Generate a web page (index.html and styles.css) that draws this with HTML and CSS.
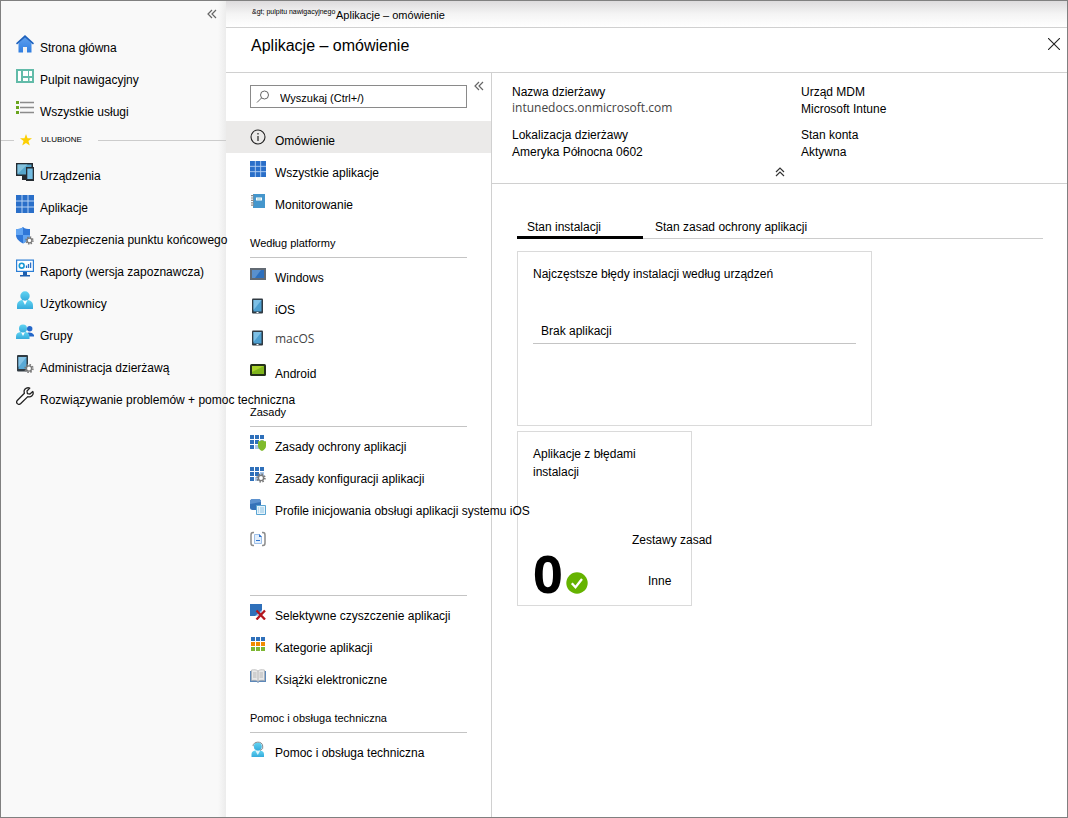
FILE: index.html
```html
<!DOCTYPE html>
<html lang="pl">
<head>
<meta charset="utf-8">
<title>Aplikacje – omówienie</title>
<link rel="stylesheet" href="styles.css">
</head>
<body>
<svg class="defs" aria-hidden="true">
  <defs>
    <linearGradient id="blue" x1="0" y1="0" x2="0" y2="1"><stop offset="0" stop-color="#5ea0ef"/><stop offset="1" stop-color="#2f7de0"/></linearGradient>
    <linearGradient id="cyan" x1="0" y1="0" x2="0" y2="1"><stop offset="0" stop-color="#62d4f2"/><stop offset="1" stop-color="#35aadb"/></linearGradient>
    <symbol id="grid" viewBox="0 0 18 18"><path fill="#2a6fc9" d="M0 0h18v18H0z"/><path d="M0 6h18M0 12h18M6 0v18M12 0v18" stroke="#b4d2f5" stroke-width="1"/></symbol>
    <symbol id="collapse" viewBox="0 0 10 10"><path d="M5 1 1 5l4 4M9 1 5 5l4 4" fill="none" stroke="currentColor" stroke-width="1.200"/></symbol>
    <symbol id="gear" viewBox="0 0 10 10"><circle cx="5" cy="5" r="3.800" fill="none" stroke="#7a7a7a" stroke-width="1.800" stroke-dasharray="1.500 1.480"/><circle cx="5" cy="5" r="2.600" fill="#fff" stroke="#7a7a7a" stroke-width="1.400"/></symbol>
    <symbol id="tablet" viewBox="0 0 16 16"><rect x="2" y=".5" width="11" height="15" rx="1" fill="#303a42"/><path fill="#4d9fd0" d="M3.500 2h8v11.500h-8z"/><path fill="#7dc0e6" d="M3.500 2h8l-8 10z"/><path stroke="#fff" d="M6.500 14.500h2"/></symbol>
    <symbol id="minigrid" viewBox="0 0 16 16"><path fill="#2f70ba" d="M0 0h4v4H0zM5 0h4v4H5zM10 0h4v4h-4zM0 5h4v4H0zM0 10h4v4H0zM5 5h4v4H5z"/><path fill="#a9c6e8" d="M10 5h4v4h-4zM5 10h4v4H5z"/></symbol>
  </defs>
</svg>
<div class="portal">
  <nav class="side" aria-label="Portal">
    <div class="side-top"><button class="icon-btn" aria-label="Zwiń"><svg class="chev"><use href="#collapse"/></svg></button></div>
    <a class="row" href="#"><svg viewBox="0 0 18 18"><path fill="url(#blue)" d="M2.500 8 9 2l6.500 6v9.500H11V12H7v5.500H2.500z"/><path fill="#1d61bd" d="M9 0 0 8.300l1 1.200L9 2.500l8 7 1-1.200z"/><path fill="#f2f2f2" d="M7 12h4v5.500H7z"/></svg><span>Strona główna</span></a>
    <a class="row" href="#"><svg viewBox="0 0 18 18"><path fill="#62bba9" d="M0 2h18v14H0z"/><path fill="#fff" d="M2 4h3v10H2zM7 4h9v5H7zM7 11h5v3H7zM13.500 11H16v3h-2.500z"/><path stroke="#62bba9" d="M12.500 4v5"/></svg><span>Pulpit nawigacyjny</span></a>
    <a class="row" href="#"><svg viewBox="0 0 18 18"><path fill="#6aa51e" d="M0 2h3v3H0zM0 7h3v3H0zM0 12h3v3H0z"/><path stroke="#8c8c8c" stroke-width="1.500" d="M4 3.500h14M4 8.500h14M4 13.500h14"/></svg><span>Wszystkie usługi</span></a>
    <div class="fav"><svg viewBox="0 0 12 12"><path fill="#fccf03" d="m6 0 1.500 4.300H12L8.400 7l1.400 4.600L6 8.900l-3.800 2.700L3.600 7 0 4.300h4.500z"/></svg><span>ULUBIONE</span></div>
    <a class="row" href="#"><svg viewBox="0 0 18 18"><path fill="#252b31" d="M0 0h17v13H0zM6 13h5v4H6z"/><path fill="#55a5cb" d="M1.500 1.500h14v10h-14z"/><path fill="#83c2dd" d="M1.500 1.500h10L1.500 11z"/><path fill="#252b31" d="M10 4h8v14h-8z"/><path fill="#72bbe1" d="M11.300 5.500h5.400v10.500h-5.400z"/></svg><span>Urządzenia</span></a>
    <a class="row" href="#"><svg><use href="#grid"/></svg><span>Aplikacje</span></a>
    <a class="row" href="#"><svg viewBox="0 0 18 18"><path fill="#2f77d8" d="M7 0c2 2 4.500 2 7 2v6c0 4-3.500 6.500-7 8.500C3.500 14.500 0 12 0 8V2c2.500 0 5 0 7-2z"/><path fill="#62a5f2" d="M7 0v8H0V2c2.500 0 5 0 7-2zM7 8h7c0 4-3.500 6.500-7 8.500z"/><use href="#gear" x="9" y="9" width="9" height="9"/></svg><span>Zabezpieczenia punktu końcowego</span></a>
    <a class="row" href="#"><svg viewBox="0 0 18 18"><rect x=".6" y="1.100" width="16.800" height="11.300" fill="#fff" stroke="#2c7fd6" stroke-width="1.200"/><circle cx="5.700" cy="6.700" r="2.400" fill="none" stroke="#1999d4" stroke-width="1.600"/><path stroke="#2c6fc4" stroke-width="1.300" d="M10.500 9V6.500M12.500 9V5M14.600 9V3.500"/><path fill="#1f5fae" d="M7 13h4v3h3v1.500H4V16h3z"/></svg><span>Raporty (wersja zapoznawcza)</span></a>
    <a class="row" href="#"><svg viewBox="0 0 18 18"><path fill="url(#cyan)" d="M1 18v-3.500C1 11 3.500 9.500 6 9h6c2.500.5 5 2 5 5.500V18z"/><path fill="#fff" d="M6.500 9h5L9 14z"/><circle cx="9" cy="5" r="4.700" fill="url(#cyan)"/></svg><span>Użytkownicy</span></a>
    <a class="row" href="#"><svg viewBox="0 0 18 18"><circle cx="13.700" cy="5.800" r="2.700" fill="#2467c9"/><path fill="#2467c9" d="M10 13.500V11c1-2 6-2.500 8 1v1.500z"/><path fill="url(#cyan)" d="M0 16v-2.500C0 10.500 2 9.500 4.500 9h5c2.500.5 4 2 4 4.500V16z"/><path fill="#fff" d="M5 9h4l-2 4z"/><circle cx="7" cy="5.500" r="4" fill="url(#cyan)"/></svg><span>Grupy</span></a>
    <a class="row" href="#"><svg viewBox="0 0 18 18"><rect x="1" width="11" height="16.500" rx="1" fill="#303a42"/><path fill="#59a9d6" d="M2.500 2h8v12h-8z"/><path fill="#86c4e6" d="M2.500 2h8l-8 10z"/><use href="#gear" x="8" y="8.500" width="10" height="10"/></svg><span>Administracja dzierżawą</span></a>
    <a class="row" href="#"><svg viewBox="0 0 18 18"><path fill="#fff" stroke="#222" stroke-width="1.300" stroke-linejoin="round" d="M16.800 4.500 14 7l-2.600-.4L11 4l2.800-2.900C11.500.2 9 1.200 8.300 3.300c-.4 1.200-.2 2 .1 2.900L1.300 13.500c-2 2.300 1 5 3.200 3.200l7.300-7.100c3 1 6.500-1.600 5-5.100z"/></svg><span>Rozwiązywanie problemów + pomoc techniczna</span></a>
  </nav>

  <div class="blade">
    <header class="crumbs"><a class="crumb-old" href="#">&amp;gt; pulpitu nawigacyjnego</a><span class="crumb">Aplikacje – omówienie</span></header>
    <div class="title"><h1>Aplikacje – omówienie</h1><button class="icon-btn close" aria-label="Zamknij"><svg viewBox="0 0 12 12"><path d="m0 0 12 12M12 0 0 12" stroke="#222" stroke-width="1.100"/></svg></button></div>
    <div class="body">
      <nav class="menu" aria-label="Aplikacje">
        <div class="search-row">
          <label class="search"><svg viewBox="0 0 14 14"><circle cx="8.500" cy="5" r="4" fill="none" stroke="#666"/><path d="M5.500 8 1 12.500" stroke="#666"/></svg><input type="text" placeholder="Wyszukaj (Ctrl+/)" aria-label="Wyszukaj"></label>
          <button class="icon-btn" aria-label="Zwiń menu"><svg class="chev"><use href="#collapse"/></svg></button>
        </div>
        <a class="row current" href="#"><svg viewBox="0 0 16 16"><circle cx="8" cy="8" r="7" fill="none" stroke="#222" stroke-width="1.100"/><path stroke="#222" stroke-width="1.200" d="M8 7v5M8 4v1.500"/></svg><span>Omówienie</span></a>
        <a class="row" href="#"><svg><use href="#grid"/></svg><span>Wszystkie aplikacje</span></a>
        <a class="row" href="#"><svg viewBox="0 0 16 16"><path fill="#4596cc" d="M3 1h12v14H3z"/><path fill="#fff" d="M6 4.500h6v3H6z"/><path fill="#9cc" d="M7 5.500h4v1H7z"/><path stroke="#8a8a8a" stroke-dasharray="1.200 1.200" stroke-width="3" d="M2.500 2v12"/></svg><span>Monitorowanie</span></a>
        <h2>Według platformy</h2>
        <a class="row" href="#"><svg viewBox="0 0 16 16"><path fill="#626a73" d="M0 2h16v12H0z"/><path fill="#2c6fbd" d="M2 4h12v8H2z"/><path fill="#5990cd" d="M2 4h9l-6 8H2z"/></svg><span>Windows</span></a>
        <a class="row" href="#"><svg><use href="#tablet"/></svg><span>iOS</span></a>
        <a class="row" href="#"><svg><use href="#tablet"/></svg><span class="alt">macOS</span></a>
        <a class="row" href="#"><svg viewBox="0 0 16 16"><rect y="2" width="16" height="12" rx="1.500" fill="#24301a"/><path fill="#7fb51c" d="M2 4h12v8H2z"/><path fill="#aad32c" d="M2 4h12L2 10z"/></svg><span>Android</span></a>
        <h2>Zasady</h2>
        <a class="row" href="#"><svg viewBox="0 0 16 16"><use href="#minigrid" width="16" height="16"/><path fill="#7fba2c" d="M12 5c1 1 2.500 1.200 4 1.200V11c0 2.500-2 4-4 5-2-1-4-2.500-4-5V6.200C9.500 6.200 11 6 12 5z"/></svg><span>Zasady ochrony aplikacji</span></a>
        <a class="row" href="#"><svg viewBox="0 0 16 16"><use href="#minigrid" width="16" height="16"/><use href="#gear" x="6" y="6" width="10" height="10"/></svg><span>Zasady konfiguracji aplikacji</span></a>
        <a class="row" href="#"><svg viewBox="0 0 16 16"><rect width="11" height="11" rx="2.500" fill="#3572b8"/><path fill="#5d92cf" d="M2 0h7l2 2v1L0 5V2z"/><path fill="#e6f3fb" stroke="#5aa5d3" d="M6.500 6.500h9v9h-9z"/><path stroke="#8fc3e2" d="M10 9h4M10 11h4M10 13h4M8 9h1M8 11h1M8 13h1"/></svg><span>Profile inicjowania obsługi aplikacji systemu iOS</span></a>
        <a class="row" href="#" aria-label="Zestawy zasad"><svg viewBox="0 0 16 16"><path fill="none" stroke="#8c8c8c" stroke-width="1.500" d="M4 1.500H3Q1 1.500 1 4v8q0 2.500 2 2.500h1M12 1.500h1q2 0 2 2.500v8q0 2.500-2 2.500h-1"/><path fill="#e3effc" stroke="#9dbfe8" d="M4.500 3.500h5l2 2v7h-7z"/><path fill="#2f74cf" d="M9 3l3 3H9zM6 9h4v1H6z"/></svg></a>
        <h2></h2>
        <a class="row" href="#"><svg viewBox="0 0 16 16"><path fill="#2f70ba" d="M0 0h12v12H0z"/><path fill="#a9c6e8" d="m5 12 7-6v6z"/><path stroke="#b3161e" stroke-width="2.300" d="m6.500 6.500 8.500 9M15 6.500l-8.500 9"/></svg><span>Selektywne czyszczenie aplikacji</span></a>
        <a class="row" href="#"><svg viewBox="0 0 16 16"><path fill="#2f70ba" d="M1 1h4v4H1zM6 1h4v4H6zM11 1h4v4h-4z"/><path fill="#f08a00" d="M1 6h4v4H1zM6 6h4v4H6zM11 6h4v4h-4z"/><path fill="#7db733" d="M1 11h4v4H1zM6 11h4v4H6zM11 11h4v4h-4z"/></svg><span>Kategorie aplikacji</span></a>
        <a class="row" href="#"><svg viewBox="0 0 16 16"><path fill="#5c87b8" d="M0 3h16v11H9l-1 1-1-1H0z"/><path fill="#e8e8e8" stroke="#b0b0b0" stroke-width=".7" d="M1.500 2C4 1.500 6.500 1.500 8 3c1.500-1.500 4-1.500 6.500-1v10.500c-2.500-.5-5-.5-6.500 1-1.500-1.500-4-1.500-6.500-1z"/><path stroke="#aaa" d="M8 3v10M3 5h3.500M3 7h3.500M3 9h3.500M9.500 5H13M9.500 7H13M9.500 9H13" stroke-width=".8"/></svg><span>Książki elektroniczne</span></a>
        <h2>Pomoc i obsługa techniczna</h2>
        <a class="row" href="#"><svg viewBox="0 0 16 16"><path fill="url(#cyan)" d="M1.500 16v-3c0-2 2-3.500 4-3.500h4c2.500 0 4.500 1.500 4.500 3.500v3z"/><path fill="#dff4fb" d="M5.500 10h4.500l-2.200 4z"/><circle cx="7.800" cy="5.500" r="4" fill="url(#cyan)"/><path fill="none" stroke="#808a90" d="M3 5C3 .2 12.500-.5 12.700 5v2.500L10 9.500"/></svg><span>Pomoc i obsługa techniczna</span></a>
      </nav>

      <main class="main">
        <section class="essentials">
          <dl>
            <div><dt>Nazwa dzierżawy</dt><dd class="alt">intunedocs.onmicrosoft.com</dd></div>
            <div><dt>Urząd MDM</dt><dd>Microsoft Intune</dd></div>
            <div><dt>Lokalizacja dzierżawy</dt><dd>Ameryka Północna 0602</dd></div>
            <div><dt>Stan konta</dt><dd>Aktywna</dd></div>
          </dl>
          <button class="icon-btn fold" aria-label="Zwiń podstawowe informacje"><svg viewBox="0 0 10 10"><path d="m1 5 4-4 4 4M1 9l4-4 4 4" fill="none" stroke="#333" stroke-width="1.200"/></svg></button>
        </section>
        <div class="content">
          <div class="tabs" role="tablist"><button class="tab active" role="tab" aria-selected="true">Stan instalacji</button><button class="tab" role="tab" aria-selected="false">Stan zasad ochrony aplikacji</button></div>
          <section class="card wide"><h3>Najczęstsze błędy instalacji według urządzeń</h3><p class="none">Brak aplikacji</p></section>
          <section class="card small"><h3>Aplikacje z błędami instalacji</h3>
            <div class="count"><strong>0</strong><svg viewBox="0 0 22 22"><circle cx="11" cy="11" r="10.700" fill="#65b300"/><path d="m5.800 11.300 3.700 4 6.500-8.300" fill="none" stroke="#fff" stroke-width="2.300"/></svg></div>
            <span class="stray policy">Zestawy zasad</span><span class="stray other">Inne</span>
          </section>
        </div>
      </main>
    </div>
  </div>
</div>
</body>
</html>
```
FILE: styles.css
```css
* { box-sizing: border-box; }
body { margin: 0; font: 12px/16px "Liberation Sans", Arial, sans-serif; color: #000; background: #fff; }
h1, h2, h3, p, dl, dd { margin: 0; font-weight: 400; }
a { color: inherit; text-decoration: none; }
button { font: inherit; color: inherit; border: 0; background: none; padding: 0; }
svg { display: block; flex: none; }
.defs { position: absolute; width: 0; height: 0; }

.portal { display: flex; min-height: 100vh; border: 1px solid #808080; }
.icon-btn svg { width: 10px; height: 10px; }
.chev { color: #666; }

.side { flex: none; width: 225px; position: relative; z-index: 2; background: linear-gradient(to right, transparent 217px, #ececec) #f9f9f9; }
.side-top { height: 27px; display: flex; justify-content: flex-end; align-items: center; padding: 0 9px 2px 0; }
.row { display: flex; align-items: center; height: 32px; white-space: nowrap; }
.row span { padding-top: 7px; }
.side .row { gap: 6px; padding-left: 15px; }
.side .row svg { width: 18px; height: 18px; }
.fav { display: flex; align-items: center; height: 32px; font-size: 8px; }
.fav svg { width: 12px; height: 12px; margin: 0 9px 0 6px; }
.fav::before { content: ""; width: 13px; height: 1px; background: #ccc; }
.fav::after { content: ""; flex: 1; height: 1px; margin-left: 16px; background: #ccc; }

.blade { flex: 1; min-width: 0; display: flex; flex-direction: column; }
.crumbs { height: 27px; display: flex; align-items: center; gap: 4px; padding: 2px 0 0 26px; border-bottom: 1px solid #d0d0d0; background: linear-gradient(#dddbdd, #f4f4f4 50%, #fff); }
.crumb-old { width: 80px; padding-bottom: 6px; font-size: 7px; line-height: 8px; white-space: nowrap; }
.crumb { font-size: 11px; }
.title { height: 45px; display: flex; justify-content: space-between; align-items: center; padding: 0 7px 9px 25px; border-bottom: 1px solid #d0d0d0; }
h1 { font-size: 16px; line-height: 20px; }
.close { margin-top: -4px; }
.close svg { width: 12px; height: 12px; }
.body { flex: 1; display: flex; }

.menu { flex: none; width: 266px; position: relative; z-index: 1; border-right: 1px solid #d0d0d0; padding-top: 12px; }
.search-row { display: flex; align-items: flex-start; gap: 7px; padding: 0 0 13px 24px; }
.search { display: flex; align-items: center; width: 217px; height: 23px; border: 1px solid #8a8a8a; padding-left: 5px; gap: 10px; background: #fff; }
.search svg { width: 14px; height: 14px; }
.search input { flex: 1; min-width: 0; border: 0; padding: 3px 0 0; outline: 0; background: none; font: inherit; font-size: 11px; }
.search input::placeholder { color: #000; opacity: 1; }
.search-row .icon-btn { height: 10px; margin-top: -4px; }
.menu .row { gap: 9px; padding-left: 24px; }
.menu .row svg { width: 16px; height: 16px; }
.menu .current { background: #ebeae9; }
h2 { font-size: 11px; line-height: 16px; height: 41px; margin: 0 24px; padding-top: 18px; border-bottom: 1px solid #c4c4c4; }
.alt { font-family: "Open Sans", "Noto Sans", sans-serif; font-size: 12px; color: #444; }
.menu .row .alt { padding-top: 2px; }

.main { flex: 1; min-width: 0; }
.essentials { padding: 11px 20px 6px; border-bottom: 1px solid #d0d0d0; }
dl { display: grid; grid-template-columns: 289px 1fr; row-gap: 9px; }
dt, dd { line-height: 17px; }
dd.alt { line-height: 14px; padding-bottom: 3px; }
.fold { display: block; margin: 6px auto 0; }
.content { padding: 31px 24px 24px 25px; }
.tabs { display: flex; gap: 2px; border-bottom: 1px solid #ccc; }
.tab { height: 24px; padding: 2px 10px 0; margin-bottom: -1px; border-bottom: 3px solid transparent; text-align: left; }
.tab.active { width: 126px; border-bottom-color: #000; }
.card { border: 1px solid #dadada; padding: 13px 15px; }
.card h3 { font-size: 12px; line-height: 18px; }
.wide { max-width: 355px; height: 175px; margin-top: 12px; }
.none { margin-top: 40px; padding: 0 8px 4px; border-bottom: 1px solid #c4c4c4; }
.small { position: relative; width: 175px; min-height: 175px; margin-top: 5px; padding-bottom: 3px; }
.count { display: flex; align-items: flex-end; gap: 3px; margin-top: 64px; }
.count strong { font: 700 52px/56px "Open Sans", sans-serif; }
.count svg { width: 22px; height: 22px; margin-bottom: 7px; }
.stray { position: absolute; white-space: nowrap; }
.policy { left: 114px; top: 100px; }
.other { left: 130px; top: 141px; }
```
